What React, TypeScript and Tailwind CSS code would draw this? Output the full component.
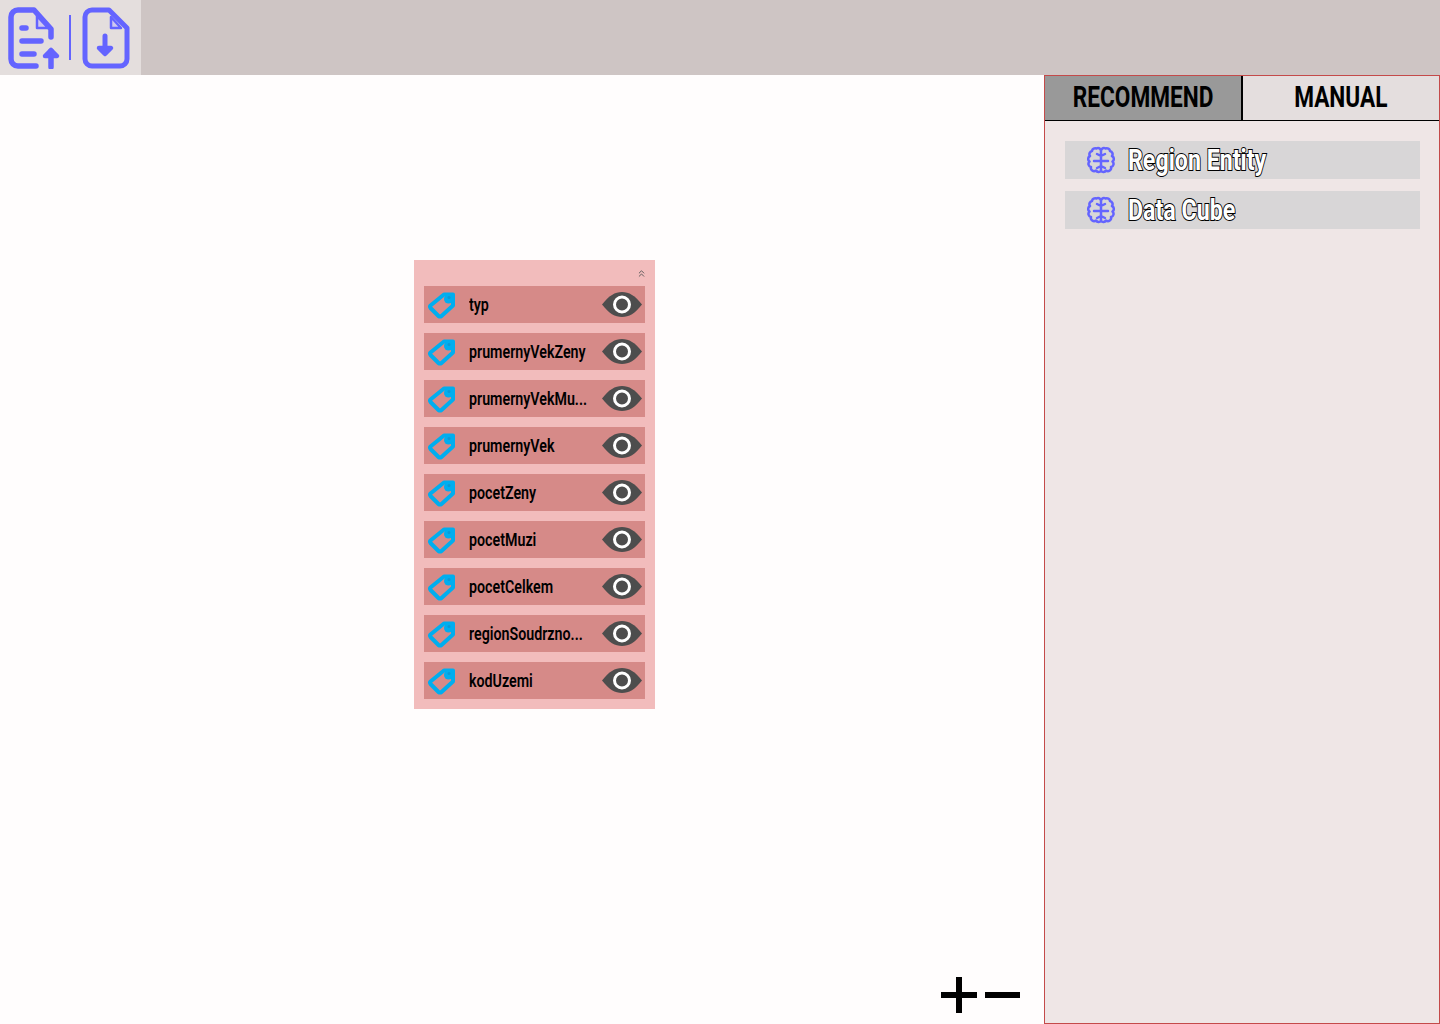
import { ChevronsUp } from 'lucide-react';

const rows = [
  'typ',
  'prumernyVekZeny',
  'prumernyVekMu...',
  'prumernyVek',
  'pocetZeny',
  'pocetMuzi',
  'pocetCelkem',
  'regionSoudrzno...',
  'kodUzemi',
];

function UploadIcon() {
  return (
    <svg width="54" height="62" viewBox="0 0 54 62" fill="none" stroke="#6464ff" strokeWidth="5.5" strokeLinecap="round" strokeLinejoin="round">
      <path d="M28 59H10a7 7 0 0 1-7-7V10a7 7 0 0 1 7-7h16l17 19v8" />
      <path d="M29 9v12h11z" fill="#cfc8f0" strokeWidth="2.5" />
      <path d="M14 21h4M14 34h19M14 47h12" />
      <path d="M43 60V44" />
      <path d="M37 49l6-6 6 6z" fill="#6464ff" strokeWidth="4.5" />
    </svg>
  );
}

function DownloadIcon() {
  return (
    <svg width="48" height="62" viewBox="0 0 48 62" fill="none" stroke="#6464ff" strokeWidth="5" strokeLinecap="round" strokeLinejoin="round">
      <path d="M27 3H10a7 7 0 0 0-7 7v42a7 7 0 0 0 7 7h28a7 7 0 0 0 7-7V21z" />
      <path d="M29 10v11h10z" fill="#cfc8f0" strokeWidth="2.5" />
      <path d="M23 29v16" />
      <path d="M17 41l6 6 6-6z" fill="#6464ff" strokeWidth="4.5" />
    </svg>
  );
}

function TagIcon() {
  return (
    <svg width="30" height="28" viewBox="0 0 30 28" fill="none" className="shrink-0">
      <path d="M4.500 14.500 18 3.500H27V14.500L15.500 25Q14 26 12.500 25L4.500 17Q3.500 15.500 4.500 14.500Z" stroke="#00aeef" strokeWidth="4" strokeLinejoin="round" />
      <circle cx="22.500" cy="8" r="4.5" fill="#00aeef" />
      <circle cx="23" cy="6.500" r="1.5" fill="#0a9ad6" />
    </svg>
  );
}

function EyeIcon() {
  return (
    <svg width="40" height="25" viewBox="0 0 40 25" className="-mt-px shrink-0">
      <path d="M0 12.500C7 3.500 13 0 20 0S33 3.500 40 12.500C33 21.500 27 25 20 25S7 21.500 0 12.500Z" fill="#4d4d4d" />
      <circle cx="20" cy="12.500" r="7.5" fill="none" stroke="#fff" strokeWidth="3" />
    </svg>
  );
}

function BrainIcon() {
  return (
    <svg width="28" height="28" viewBox="0 0 28 28" fill="none" stroke="#6464ff" strokeWidth="2.5" strokeLinecap="round" strokeLinejoin="round" className="shrink-0">
      <path d="M14 4A3.200 3.200 0 0 0 9.500 2.500A3.200 3.200 0 0 0 5 5A3.200 3.200 0 0 0 3 10A3.200 3.200 0 0 0 2.500 15.500A3.200 3.200 0 0 0 4 21A3.200 3.200 0 0 0 9 24.500A3.200 3.200 0 0 0 14 25A3.200 3.200 0 0 0 19 24.500A3.200 3.200 0 0 0 24 21A3.200 3.200 0 0 0 25.500 15.500A3.200 3.200 0 0 0 25 10A3.200 3.200 0 0 0 23 5A3.200 3.200 0 0 0 18.500 2.500A3.200 3.200 0 0 0 14 4Z" />
      <path d="M14 4V25M14 10 10 8M14 10 18 8M14 15H7M14 15H21M14 20 10 22M14 20 18 22" />
    </svg>
  );
}

function AttributeRow({ name }: { name: string }) {
  return (
    <div className="flex h-[37px] items-center bg-[#d68a88] pl-[2px] pr-[3px]">
      <TagIcon />
      <div className="ml-[13px] min-w-0 flex-1 pr-[12px]">
        <div className="w-[158px] origin-left scale-x-[0.75] whitespace-nowrap text-[19px] font-semibold leading-[37px] text-black">{name}</div>
      </div>
      <EyeIcon />
    </div>
  );
}

export default function App() {
  return (
    <div className="flex h-screen w-full flex-col overflow-hidden bg-[#fffdfd] font-['Roboto',sans-serif]">
      <header className="flex h-[75px] shrink-0 bg-[#cec5c4]">
        <div className="flex w-[141px] items-center bg-[#e4dedd] pl-[8px]">
          <UploadIcon />
          <div className="ml-[7px] mr-[11px] h-[45px] w-[2px] bg-[#6464ff]" />
          <DownloadIcon />
        </div>
      </header>

      <main className="flex min-h-0 flex-1">
        <div className="relative flex-1 pl-[414px] pt-[185px]">
          <section className="w-[241px] bg-[#f2bcbc] px-[10px] pb-[10px]">
            <div className="flex h-[26px] items-center justify-end pr-[-2px]">
              <ChevronsUp size={11} color="#555" className="-mr-[2px]" />
            </div>
            <div className="flex flex-col gap-[10px]">
              {rows.map((name) => (
                <AttributeRow key={name} name={name} />
              ))}
            </div>
          </section>

          <div className="absolute bottom-[11px] right-[24px] flex items-center gap-[8px]">
            <div className="relative h-[36px] w-[36px]">
              <div className="absolute left-0 top-[15px] h-[6px] w-[36px] bg-black" />
              <div className="absolute left-[15px] top-0 h-[36px] w-[6px] bg-black" />
            </div>
            <div className="h-[6px] w-[35px] bg-black" />
          </div>
        </div>

        <aside className="flex w-[396px] shrink-0 flex-col border border-[#c44a4a] bg-[#efe6e6]">
          <div className="flex h-[45px] shrink-0 border-b border-black">
            <div className="flex w-[198px] items-center justify-center border-r-2 border-black bg-[#999999]">
              <span className="scale-x-[0.78] whitespace-nowrap text-[29px] font-bold text-black">RECOMMEND</span>
            </div>
            <div className="flex flex-1 items-center justify-center bg-[#e4dede]">
              <span className="scale-x-[0.78] whitespace-nowrap text-[29px] font-bold text-black">MANUAL</span>
            </div>
          </div>
          <div className="flex flex-col gap-[12px] pl-[20px] pr-[19px] pt-[20px]">
            {['Region Entity', 'Data Cube'].map((label) => (
              <div key={label} className="flex h-[38px] items-center bg-[#d8d6d7] pl-[22px]">
                <BrainIcon />
                <span className="ml-[13px] mt-[2px] origin-left scale-x-[0.8] whitespace-nowrap text-[29px] font-bold text-white [-webkit-text-stroke:2px_#000] [paint-order:stroke_fill]">{label}</span>
              </div>
            ))}
          </div>
        </aside>
      </main>
    </div>
  );
}
